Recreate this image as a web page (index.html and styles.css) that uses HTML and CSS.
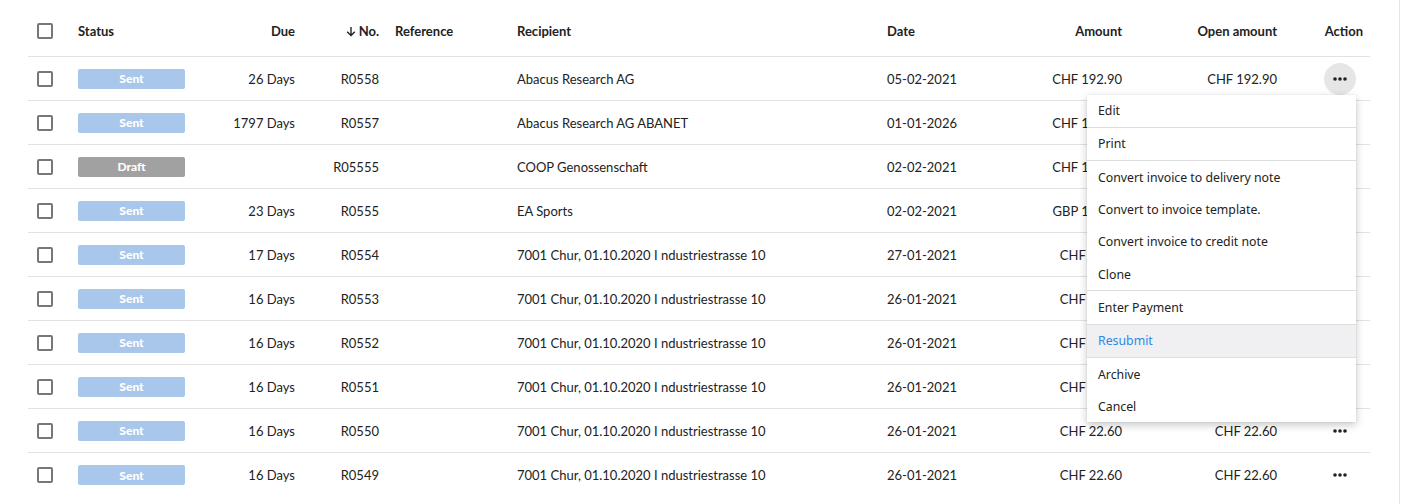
FILE: index.html
```html
<!DOCTYPE html>
<html lang="en">
<head>
<meta charset="utf-8">
<title>Invoices</title>
<link rel="stylesheet" href="styles.css">
</head>
<body>
<div class="page">
  <div class="table">
    <div class="row head">
      <div class="cell c-check"><span class="checkbox"></span></div>
      <div class="cell">Status</div>
      <div class="cell right">Due</div>
      <div class="cell right"><span class="sort"><svg width="10" height="11" viewBox="0 0 10 11"><path d="M5 1v8.5M1.2 5.8L5 9.6 8.8 5.8" fill="none" stroke="#222" stroke-width="1.4"/></svg>No.</span></div>
      <div class="cell">Reference</div>
      <div class="cell">Recipient</div>
      <div class="cell">Date</div>
      <div class="cell right">Amount</div>
      <div class="cell right c-open">Open amount</div>
      <div class="cell right c-action-head">Action</div>
    </div>

    <div class="row">
      <div class="cell c-check"><span class="checkbox"></span></div>
      <div class="cell"><span class="badge sent">Sent</span></div>
      <div class="cell right">26 Days</div>
      <div class="cell right">R0558</div>
      <div class="cell"></div>
      <div class="cell">Abacus Research AG</div>
      <div class="cell">05-02-2021</div>
      <div class="cell right">CHF 192.90</div>
      <div class="cell right c-open">CHF 192.90</div>
      <div class="cell center">
        <div class="action-wrap">
          <span class="dots active"><svg width="14" height="4" viewBox="0 0 14 4"><circle cx="2" cy="2" r="1.8"/><circle cx="7" cy="2" r="1.8"/><circle cx="12" cy="2" r="1.8"/></svg></span>
          <div class="menu">
            <div class="item">Edit</div>
            <div class="sep"></div>
            <div class="item">Print</div>
            <div class="sep"></div>
            <div class="item">Convert invoice to delivery note</div>
            <div class="item">Convert to invoice template.</div>
            <div class="item">Convert invoice to credit note</div>
            <div class="item">Clone</div>
            <div class="sep"></div>
            <div class="item">Enter Payment</div>
            <div class="sep"></div>
            <div class="item hover">Resubmit</div>
            <div class="sep"></div>
            <div class="item">Archive</div>
            <div class="item">Cancel</div>
          </div>
        </div>
      </div>
    </div>

    <div class="row">
      <div class="cell c-check"><span class="checkbox"></span></div>
      <div class="cell"><span class="badge sent">Sent</span></div>
      <div class="cell right">1797 Days</div>
      <div class="cell right">R0557</div>
      <div class="cell"></div>
      <div class="cell">Abacus Research AG ABANET</div>
      <div class="cell">01-01-2026</div>
      <div class="cell right">CHF 104.00</div>
      <div class="cell right c-open">CHF 104.00</div>
      <div class="cell center"><span class="dots"><svg width="14" height="4" viewBox="0 0 14 4"><circle cx="2" cy="2" r="1.8"/><circle cx="7" cy="2" r="1.8"/><circle cx="12" cy="2" r="1.8"/></svg></span></div>
    </div>

    <div class="row">
      <div class="cell c-check"><span class="checkbox"></span></div>
      <div class="cell"><span class="badge draft">Draft</span></div>
      <div class="cell right"></div>
      <div class="cell right">R05555</div>
      <div class="cell"></div>
      <div class="cell">COOP Genossenschaft</div>
      <div class="cell">02-02-2021</div>
      <div class="cell right">CHF 100.00</div>
      <div class="cell right c-open">CHF 100.00</div>
      <div class="cell center"><span class="dots"><svg width="14" height="4" viewBox="0 0 14 4"><circle cx="2" cy="2" r="1.8"/><circle cx="7" cy="2" r="1.8"/><circle cx="12" cy="2" r="1.8"/></svg></span></div>
    </div>

    <div class="row">
      <div class="cell c-check"><span class="checkbox"></span></div>
      <div class="cell"><span class="badge sent">Sent</span></div>
      <div class="cell right">23 Days</div>
      <div class="cell right">R0555</div>
      <div class="cell"></div>
      <div class="cell">EA Sports</div>
      <div class="cell">02-02-2021</div>
      <div class="cell right">GBP 100.00</div>
      <div class="cell right c-open">GBP 100.00</div>
      <div class="cell center"><span class="dots"><svg width="14" height="4" viewBox="0 0 14 4"><circle cx="2" cy="2" r="1.8"/><circle cx="7" cy="2" r="1.8"/><circle cx="12" cy="2" r="1.8"/></svg></span></div>
    </div>

    <div class="row">
      <div class="cell c-check"><span class="checkbox"></span></div>
      <div class="cell"><span class="badge sent">Sent</span></div>
      <div class="cell right">17 Days</div>
      <div class="cell right">R0554</div>
      <div class="cell"></div>
      <div class="cell">7001 Chur, 01.10.2020 I ndustriestrasse 10</div>
      <div class="cell">27-01-2021</div>
      <div class="cell right">CHF 22.60</div>
      <div class="cell right c-open">CHF 22.60</div>
      <div class="cell center"><span class="dots"><svg width="14" height="4" viewBox="0 0 14 4"><circle cx="2" cy="2" r="1.8"/><circle cx="7" cy="2" r="1.8"/><circle cx="12" cy="2" r="1.8"/></svg></span></div>
    </div>

    <div class="row">
      <div class="cell c-check"><span class="checkbox"></span></div>
      <div class="cell"><span class="badge sent">Sent</span></div>
      <div class="cell right">16 Days</div>
      <div class="cell right">R0553</div>
      <div class="cell"></div>
      <div class="cell">7001 Chur, 01.10.2020 I ndustriestrasse 10</div>
      <div class="cell">26-01-2021</div>
      <div class="cell right">CHF 22.60</div>
      <div class="cell right c-open">CHF 22.60</div>
      <div class="cell center"><span class="dots"><svg width="14" height="4" viewBox="0 0 14 4"><circle cx="2" cy="2" r="1.8"/><circle cx="7" cy="2" r="1.8"/><circle cx="12" cy="2" r="1.8"/></svg></span></div>
    </div>

    <div class="row">
      <div class="cell c-check"><span class="checkbox"></span></div>
      <div class="cell"><span class="badge sent">Sent</span></div>
      <div class="cell right">16 Days</div>
      <div class="cell right">R0552</div>
      <div class="cell"></div>
      <div class="cell">7001 Chur, 01.10.2020 I ndustriestrasse 10</div>
      <div class="cell">26-01-2021</div>
      <div class="cell right">CHF 22.60</div>
      <div class="cell right c-open">CHF 22.60</div>
      <div class="cell center"><span class="dots"><svg width="14" height="4" viewBox="0 0 14 4"><circle cx="2" cy="2" r="1.8"/><circle cx="7" cy="2" r="1.8"/><circle cx="12" cy="2" r="1.8"/></svg></span></div>
    </div>

    <div class="row">
      <div class="cell c-check"><span class="checkbox"></span></div>
      <div class="cell"><span class="badge sent">Sent</span></div>
      <div class="cell right">16 Days</div>
      <div class="cell right">R0551</div>
      <div class="cell"></div>
      <div class="cell">7001 Chur, 01.10.2020 I ndustriestrasse 10</div>
      <div class="cell">26-01-2021</div>
      <div class="cell right">CHF 22.60</div>
      <div class="cell right c-open">CHF 22.60</div>
      <div class="cell center"><span class="dots"><svg width="14" height="4" viewBox="0 0 14 4"><circle cx="2" cy="2" r="1.8"/><circle cx="7" cy="2" r="1.8"/><circle cx="12" cy="2" r="1.8"/></svg></span></div>
    </div>

    <div class="row">
      <div class="cell c-check"><span class="checkbox"></span></div>
      <div class="cell"><span class="badge sent">Sent</span></div>
      <div class="cell right">16 Days</div>
      <div class="cell right">R0550</div>
      <div class="cell"></div>
      <div class="cell">7001 Chur, 01.10.2020 I ndustriestrasse 10</div>
      <div class="cell">26-01-2021</div>
      <div class="cell right">CHF 22.60</div>
      <div class="cell right c-open">CHF 22.60</div>
      <div class="cell center"><span class="dots"><svg width="14" height="4" viewBox="0 0 14 4"><circle cx="2" cy="2" r="1.8"/><circle cx="7" cy="2" r="1.8"/><circle cx="12" cy="2" r="1.8"/></svg></span></div>
    </div>

    <div class="row last">
      <div class="cell c-check"><span class="checkbox"></span></div>
      <div class="cell"><span class="badge sent">Sent</span></div>
      <div class="cell right">16 Days</div>
      <div class="cell right">R0549</div>
      <div class="cell"></div>
      <div class="cell">7001 Chur, 01.10.2020 I ndustriestrasse 10</div>
      <div class="cell">26-01-2021</div>
      <div class="cell right">CHF 22.60</div>
      <div class="cell right c-open">CHF 22.60</div>
      <div class="cell center"><span class="dots"><svg width="14" height="4" viewBox="0 0 14 4"><circle cx="2" cy="2" r="1.8"/><circle cx="7" cy="2" r="1.8"/><circle cx="12" cy="2" r="1.8"/></svg></span></div>
    </div>
  </div>
</div>
</body>
</html>
```

FILE: styles.css
```css
* { box-sizing: border-box; }
html, body { margin: 0; padding: 0; background: #fff; }
body {
  font-family: Lato, "Liberation Sans", sans-serif;
  font-size: 13px;
  color: #222;
  height: 504px;
  overflow: hidden;
}
.page {
  width: 1400px;
  height: 504px;
  border-right: 1px solid #e4e4e4;
  padding-left: 28px;
}
.table { width: 1342px; }
.row {
  display: grid;
  grid-template-columns: 42px 123px 110px 84px 122px 370px 121px 130px 180px 60px;
  height: 44px;
  border-bottom: 1px solid #e2e2e2;
  align-items: center;
}
.row.last { border-bottom: none; }
.row.head {
  height: 57px;
  padding-top: 6px;
  font-weight: 700;
}
.cell {
  padding: 0 8px;
  white-space: nowrap;
  display: flex;
  align-items: center;
}
.cell.right { justify-content: flex-end; }
.cell.center { justify-content: center; padding: 0; }
.cell.c-open { padding-right: 33px; }
.cell.c-check { padding-left: 9px; }
.cell.c-action-head { padding-right: 7px; }
.checkbox {
  display: block;
  width: 16px;
  height: 16px;
  border: 2px solid #777;
  border-radius: 2px;
  background: #fff;
}
.sort { display: inline-flex; align-items: center; gap: 3px; }
.sort svg { display: block; }
.badge {
  display: flex;
  align-items: center;
  justify-content: center;
  width: 107px;
  height: 20px;
  border-radius: 2px;
  color: #fff;
  font-size: 12px;
  font-weight: 900;
}
.badge.sent { background: #a9c7eb; }
.badge.draft { background: #a1a1a1; }
.action-wrap { position: relative; }
.dots {
  display: flex;
  align-items: center;
  justify-content: center;
  width: 32px;
  height: 32px;
  border-radius: 50%;
}
.dots svg { fill: #222; display: block; }
.dots.active { background: #e6e6e6; }
.menu {
  position: absolute;
  top: 100%;
  right: 0;
  width: 269px;
  background: #fff;
  box-shadow: 0 3px 8px rgba(0,0,0,0.22), 0 0 2px rgba(0,0,0,0.08);
  font-family: "Noto Sans", "Open Sans", sans-serif;
  font-size: 12.3px;
  color: #222;
  z-index: 10;
  text-align: left;
}
.menu .item {
  height: 32.3px;
  display: flex;
  align-items: center;
  padding-left: 11px;
}
.menu .item.hover { background: #f0f0f3; color: #2b8ae3; }
.menu .sep { height: 1px; background: #dedede; }
```
